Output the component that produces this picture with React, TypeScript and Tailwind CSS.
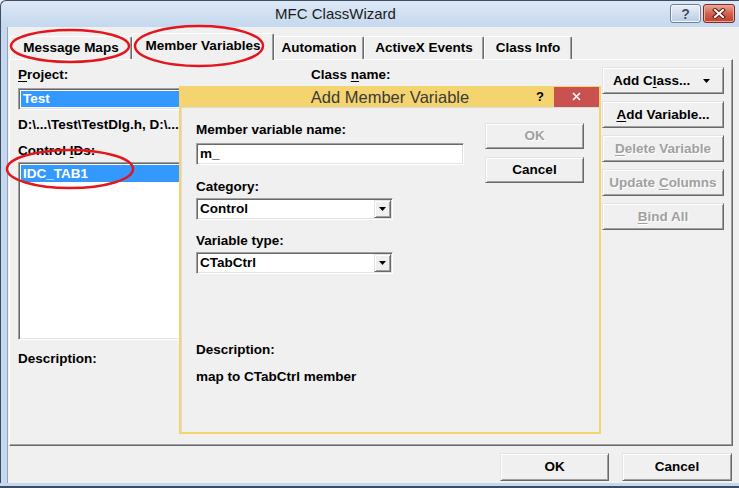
import type { ReactNode } from "react";

const raised =
  "border border-t-[#e3e3e3] border-l-[#e3e3e3] border-b-[#696969] border-r-[#696969] shadow-[inset_1px_1px_#ffffff,inset_-1px_-1px_#a0a0a0] bg-[#f0f0f0]";
const sunken =
  "border border-t-[#a0a0a0] border-l-[#a0a0a0] border-b-white border-r-white shadow-[inset_1px_1px_#696969,inset_-1px_-1px_#e3e3e3]";

function Btn({ children, className = "", disabled = false }: { children: ReactNode; className?: string; disabled?: boolean }) {
  return (
    <div
      className={`flex items-center justify-center ${raised} ${disabled ? "text-[#a0a0a0] [text-shadow:1px_1px_#ffffff]" : "text-black"} ${className}`}
    >
      {children}
    </div>
  );
}

function Arrow() {
  return (
    <svg width="7" height="4" viewBox="0 0 7 4">
      <path d="M0 0h7L3.5 4z" fill="#000" />
    </svg>
  );
}

function Combo({ value, className = "" }: { value: string; className?: string }) {
  return (
    <div className={`flex h-[22px] items-center bg-white ${sunken} ${className}`}>
      <span className="flex-1 pl-[3px]">{value}</span>
      <div className={`mr-[1px] flex h-[18px] w-[17px] items-center justify-center ${raised}`}>
        <Arrow />
      </div>
    </div>
  );
}

function Tab({ label, width, selected = false }: { label: string; width: string; selected?: boolean }) {
  if (selected) {
    return (
      <div
        className={`relative z-10 -mb-px flex h-[27px] items-center justify-center rounded-t-[2px] border-t border-l border-white border-r border-r-[#696969] bg-[#f0f0f0] pb-[3px] shadow-[inset_-1px_0_#a0a0a0] ${width}`}
      >
        {label}
      </div>
    );
  }
  return (
    <div
      className={`flex h-[23px] items-center justify-center rounded-t-[2px] border-t border-l border-white border-r border-r-[#696969] pb-px shadow-[inset_-1px_0_#a0a0a0] ${width}`}
    >
      {label}
    </div>
  );
}

function AddMemberVariable() {
  return (
    <div className="absolute left-[179px] top-[86px] z-10 flex h-[348px] w-[422px] flex-col">
      <div className="flex h-[21px] items-center bg-[#f4d46e]">
        <div className="w-[68px]" />
        <div className="flex-1 text-center text-[16.5px] font-normal text-[#3a3a3a]">Add Member Variable</div>
        <div className="flex h-full w-[68px] items-center">
          <span className="w-[14px] text-center text-[13px]">?</span>
          <div className="ml-[7px] flex h-[20px] w-[45px] items-center justify-center bg-[#c9514f]">
            <svg width="9" height="9" viewBox="0 0 9 9">
              <path d="M1 1l7 7M8 1l-7 7" stroke="#fff" strokeWidth="1.6" />
            </svg>
          </div>
        </div>
      </div>
      <div className="flex flex-1 border-2 border-t-0 border-[#f4d46e] bg-[#f0f0f0]">
        <div className="flex flex-1 border-t border-l border-[#dcdcdc] pl-[14px] pt-[14px]">
          <div className="flex w-[268px] flex-col">
            <div>Member variable name:</div>
            <div className={`mt-[5px] flex h-[22px] items-center bg-white pl-[3px] ${sunken}`}>m_</div>
            <div className="mt-[14px]">Category:</div>
            <Combo value="Control" className="mt-[3px] w-[197px]" />
            <div className="mt-[13px]">Variable type:</div>
            <Combo value="CTabCtrl" className="mt-[3px] w-[197px]" />
            <div className="mt-[68px]">Description:</div>
            <div className="mt-[11px]">map to CTabCtrl member</div>
          </div>
          <div className="ml-[21px] flex w-[99px] flex-col pt-[1px]">
            <Btn disabled className="h-[26px]">OK</Btn>
            <Btn className="mt-[8px] h-[26px]">Cancel</Btn>
          </div>
        </div>
      </div>
    </div>
  );
}

export default function App() {
  return (
    <div className="relative h-[488px] w-[739px] select-none overflow-hidden bg-[#f0f0f0] font-['Liberation_Sans',Arial,sans-serif] text-[13.5px] font-bold leading-4 text-black">
      {/* title bar */}
      <div className="flex h-[27px] items-start rounded-tl-[6px] border-t border-l border-[#3c4d63] bg-gradient-to-b from-[#dce8f6] to-[#c5d8ee]">
        <div className="flex-1 pt-[5px] text-center text-[15px] font-normal text-[#1b1b1b]">MFC ClassWizard</div>
        <div className="mr-[4px] mt-[3px] flex gap-[2px]">
          <div className="flex h-[19px] w-[31px] items-center justify-center rounded-[3px] border border-[#6f7f95] bg-gradient-to-b from-[#eaf0f8] to-[#b9cbe2] shadow-[inset_0_0_0_1px_#f4f8fc]">
            <span className="text-[14px] leading-none text-[#3b4a60] [text-shadow:0_0_1px_#ffffff]">?</span>
          </div>
          <div className="flex h-[19px] w-[32px] items-center justify-center rounded-[3px] border border-[#7c2b22] bg-gradient-to-b from-[#e9a898] via-[#d2604d] to-[#c0402c] shadow-[inset_0_0_0_1px_#eda99c]">
            <svg width="14" height="11" viewBox="0 0 14 11">
              <path d="M3 2l8 7M11 2l-8 7" stroke="#5a1b14" strokeWidth="4" strokeLinecap="square" />
              <path d="M3 2l8 7M11 2l-8 7" stroke="#fff" strokeWidth="2" strokeLinecap="square" />
            </svg>
          </div>
        </div>
      </div>

      <div className="flex h-[456px]">
        <div className="w-[8px] border-l border-r border-l-[#3c4d63] border-r-[#8ea6c4] bg-[#c5d8ee]" />
        <div className="flex flex-1 flex-col">
          {/* tabs */}
          <div className="mt-[6px] flex h-[26px] items-end pl-[2px]">
            <Tab label="Message Maps" width="w-[122px]" />
            <Tab label="Member Variables" width="w-[142px]" selected />
            <Tab label="Automation" width="w-[90px]" />
            <Tab label="ActiveX Events" width="w-[120px]" />
            <Tab label="Class Info" width="w-[88px]" />
          </div>

          {/* tab panel */}
          <div className="ml-px flex h-[387px] w-[724px] border-t border-l border-white border-b border-r border-b-[#696969] border-r-[#696969] pl-[8px] shadow-[inset_-1px_-1px_#a0a0a0]">
            <div className="flex w-[572px] flex-col">
              <div className="mt-[7px] flex">
                <div className="w-[293px]">
                  <u className="underline-offset-2">P</u>roject:
                </div>
                <div>
                  Class <u className="underline-offset-2">n</u>ame:
                </div>
              </div>
              <div className="mt-[5px] flex h-[22px]">
                <div className={`flex h-[22px] w-[277px] items-center bg-white p-[2px] ${sunken}`}>
                  <div className="flex h-full flex-1 items-center bg-[#3399ff] pl-[2px] text-white">Test</div>
                </div>
                <Combo value="" className="ml-[16px] w-[279px]" />
              </div>
              <div className="mt-[7px] whitespace-nowrap">{"D:\\...\\Test\\TestDlg.h, D:\\..."}</div>
              <div className="mt-[10px]">
                Control <u className="underline-offset-2">I</u>Ds:
              </div>
              <div className={`mt-[3px] h-[178px] w-full bg-white p-[2px] ${sunken}`}>
                <div className="flex h-[17px] items-center bg-[#3399ff] pl-[2px] text-white">IDC_TAB1</div>
              </div>
              <div className="mt-[11px]">Description:</div>
            </div>

            <div className="ml-[12px] mt-[7px] flex w-[122px] flex-col gap-[7px]">
              <Btn className="h-[27px] justify-between! pl-[10px] pr-[13px]">
                <span>
                  Add C<u className="underline-offset-2">l</u>ass...
                </span>
                <Arrow />
              </Btn>
              <Btn className="h-[27px]">
                <span>
                  <u className="underline-offset-2">A</u>dd Variable...
                </span>
              </Btn>
              <Btn disabled className="h-[27px]">
                <span>
                  <u className="underline-offset-2">D</u>elete Variable
                </span>
              </Btn>
              <Btn disabled className="h-[27px]">
                <span>
                  Update <u className="underline-offset-2">C</u>olumns
                </span>
              </Btn>
              <Btn disabled className="h-[27px]">
                <span>
                  <u className="underline-offset-2">B</u>ind All
                </span>
              </Btn>
            </div>
          </div>

          {/* bottom buttons */}
          <div className="mt-[7px] flex justify-end gap-[13px] pr-[7px]">
            <Btn className="h-[28px] w-[109px]">OK</Btn>
            <Btn className="h-[28px] w-[110px]">Cancel</Btn>
          </div>
        </div>
      </div>
      <div className="h-[5px] border-b-2 border-[#3c4d63] bg-[#c5d8ee]" />

      <AddMemberVariable />

      {/* red annotation marks */}
      <svg className="pointer-events-none absolute left-0 top-0 z-20" width="739" height="488" viewBox="0 0 739 488">
        <ellipse cx="70" cy="46" rx="59" ry="16" fill="none" stroke="#e3151d" strokeWidth="2.5" />
        <ellipse cx="199" cy="46" rx="64" ry="20" fill="none" stroke="#e3151d" strokeWidth="2.5" />
        <ellipse cx="70" cy="169" rx="63" ry="19" fill="none" stroke="#e3151d" strokeWidth="2.5" />
      </svg>
    </div>
  );
}
